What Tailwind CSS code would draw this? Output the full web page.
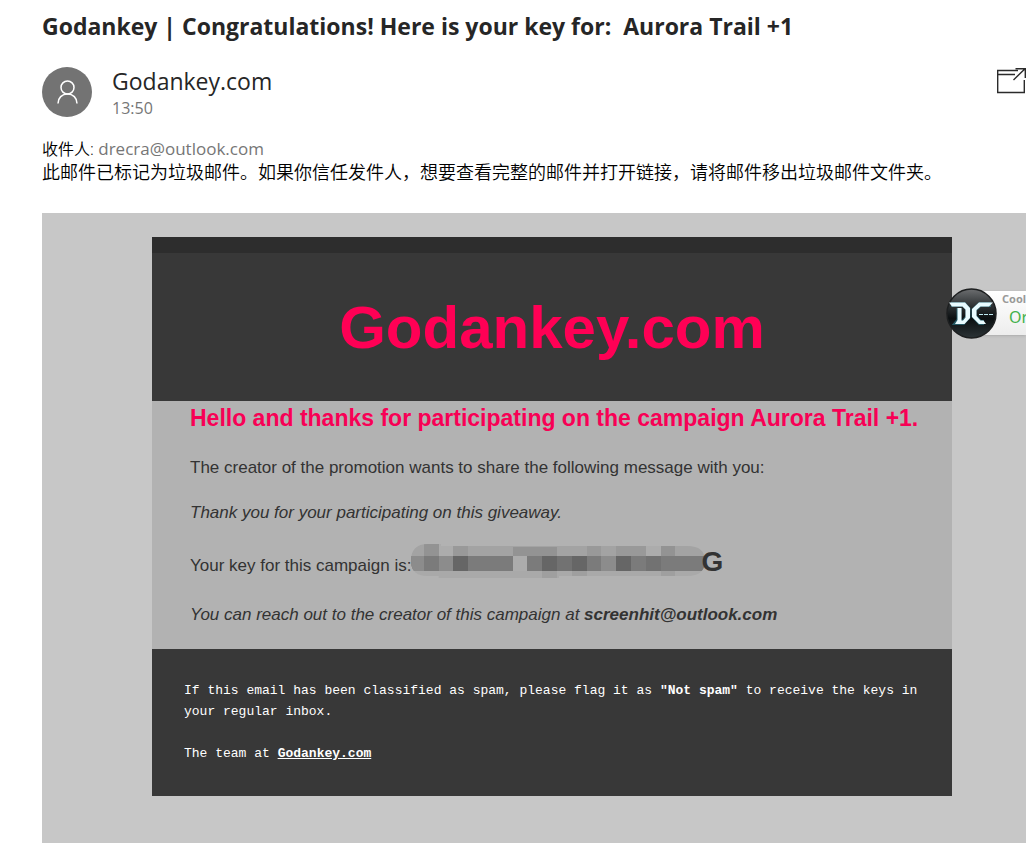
<!DOCTYPE html>
<html lang="zh-CN">

<head>
    <meta charset="UTF-8">
    <meta name="viewport" content="width=device-width, initial-scale=1.0">
    <title>Godankey | Congratulations!</title>
    <script src="https://cdn.jsdelivr.net/npm/@tailwindcss/browser@4"></script>
</head>

<body class="bg-white overflow-hidden font-['Open_Sans','Noto_Sans_CJK_SC',sans-serif]">
    <div class="min-h-screen flex flex-col pl-[42px]">

        <!-- Mail header -->
        <header class="pt-2">
            <h1 class="text-[23px] leading-9 font-bold text-[#262626] whitespace-pre">Godankey | Congratulations! Here is your key for:  Aurora Trail +1</h1>

            <div class="flex items-start mt-5">
                <div class="size-[50px] mt-[3px] mr-5 shrink-0 rounded-full bg-[#737373] flex items-center justify-center">
                    <svg class="size-6" viewBox="0 0 24 24" fill="none" stroke="white" stroke-width="1.5">
                        <circle cx="12.500" cy="7.5" r="6.5" />
                        <path d="M3 23.5c0-5.600 4-9.500 9.500-9.500s9.500 3.900 9.500 9.500" />
                    </svg>
                </div>
                <div class="flex-1">
                    <p class="text-[23px] leading-[34px] text-[#262626]">Godankey.com</p>
                    <p class="text-base leading-5 text-[#767676]">13:50</p>
                </div>
                <button type="button" aria-label="Open in new window" class="mt-1 shrink-0">
                    <svg class="w-[30px] h-[27px]" viewBox="0 0 30 27" fill="none" stroke="#2b2b2b" stroke-width="1.4">
                        <path d="M22 2.500H1.700V24.500H28.300V12M1.700 6.500H19" />
                        <path d="M17.500 12L29 .7M19.500 .7H29.300V10" />
                    </svg>
                </button>
            </div>

            <p class="mt-[19px] text-[17px] leading-6 text-[#767676]"><span class="text-base font-[350] text-black">收件人:</span> <a href="mailto:drecra@outlook.com">drecra@outlook.com</a></p>
            <p class="text-lg leading-[22px] text-black font-[350]">此邮件已标记为垃圾邮件。如果你信任发件人，想要查看完整的邮件并打开链接，请将邮件移出垃圾邮件文件夹。</p>
        </header>

        <!-- Mail body -->
        <main class="relative flex-1 mt-[30px] pt-6 pb-[47px] pl-[110px] bg-[#c7c7c7] font-['Liberation_Sans',sans-serif]">
            <div class="w-full max-w-[800px]">
                <div class="h-4 bg-[#2d2d2d]"></div>
                <div class="h-[148px] pt-0.5 bg-[#383838] flex items-center justify-center">
                    <h2 class="text-6xl font-bold text-[#ff0055]">Godankey.com</h2>
                </div>

                <div class="bg-[#b2b2b2] pl-[38px] pb-[22px] text-[#333333] text-[17px] leading-6">
                    <h3 class="text-[23px] leading-[34px] font-bold text-[#f80055] whitespace-nowrap">Hello and thanks for participating on the campaign Aurora Trail +1.</h3>
                    <p class="mt-[21px]">The creator of the promotion wants to share the following message with you:</p>
                    <p class="mt-[21px] italic">Thank you for your participating on this giveaway.</p>
                    <div class="mt-4 h-10 pt-[3px] flex items-baseline">
                        <p class="whitespace-nowrap">Your key for this campaign is:</p>
                        <!-- Masked key -->
                        <svg class="w-[294px] h-[34px] shrink-0 self-start" viewBox="0 0 298 34" preserveAspectRatio="none" shape-rendering="crispEdges">
                            <clipPath id="mask">
                                <path d="M17 0H30V2H280Q298 2 298 17Q298 32 280 32H150V34H28V32H17Q0 32 0 17Q0 0 17 0Z" />
                            </clipPath>
                            <g clip-path="url(#mask)">
                                <path fill="#a3a3a3" d="M0 0h298v12H0z" />
                                <path fill="#a9a9a9" d="M0 27h298v7H0z" />
                                <path fill="#7b7b7b" d="M0 12h298v15H0z" />
                                <path fill="#8c8c8c" d="M0 12h13v15H0zM28 12h15v15H28zM193 12h15v15H193z" />
                                <path fill="#939393" d="M13 0h15v12H13zM103 3h45v9H103zM253 2h15v10H253z" />
                                <path fill="#999999" d="M43 2h15v10H43zM178 2h15v10H178zM208 2h30v10H208z" />
                                <path fill="#acacac" d="M28 0h15v12H28zM103 12h15v15H103zM238 2h15v10H238z" />
                                <path fill="#666666" d="M43 12h15v15H43zM133 12h15v15H133zM163 12h15v15H163zM208 12h15v15H208z" />
                                <path fill="#727272" d="M148 12h15v15H148zM238 12h15v15H238z" />
                                <path fill="#9f9f9f" d="M133 27h15v7H133zM163 27h15v5H163zM253 27h15v5H253z" />
                            </g>
                        </svg>
                        <strong class="-ml-1 text-[28px] leading-9">G</strong>
                    </div>
                    <p class="mt-[22px] italic">You can reach out to the creator of this campaign at <a href="mailto:screenhit@outlook.com" class="font-bold">screenhit@outlook.com</a></p>
                </div>

                <div class="bg-[#383838] text-white px-8 pt-[31px] pb-8 text-[13px] leading-[21px] font-['Liberation_Mono',monospace]">
                    <p>If this email has been classified as spam, please flag it as <strong>"Not spam"</strong> to receive the keys in your regular inbox.</p>
                    <p class="mt-[21px]">The team at <a href="#" class="font-bold underline">Godankey.com</a></p>
                </div>
            </div>

            <!-- Floating widget -->
            <aside class="absolute top-[75px] right-0 w-20 h-[51px] overflow-hidden">
                <div class="absolute top-[3px] left-[25px] right-0 h-11 pl-[31px] bg-linear-to-b from-white to-[#ededed] shadow font-['Noto_Sans',sans-serif] whitespace-nowrap">
                    <p class="text-[11px] leading-4 font-bold text-[#999999]">Cool</p>
                    <p class="pl-[7px] text-base leading-5 text-[#43b14b]">Or</p>
                </div>
                <svg class="absolute top-0 left-0 size-[51px]" viewBox="0 0 51 51">
                    <defs>
                        <linearGradient id="ball" x1="0" y1="0" x2="0" y2="1">
                            <stop offset="0" stop-color="#6c6e70" />
                            <stop offset=".35" stop-color="#2d3133" />
                            <stop offset=".6" stop-color="#0b0f11" />
                            <stop offset="1" stop-color="#2b3336" />
                        </linearGradient>
                    </defs>
                    <circle cx="25.500" cy="25.500" r="24.500" fill="url(#ball)" stroke="#1d1f20" stroke-width="1.500" />
                    <g fill="none" stroke="#3fb6d0" stroke-width="5" opacity=".4">
                        <path d="M5 16.500H18L22 21V29L17 34.500H11L13 32V20" />
                        <path d="M45 16.500H34L28 22V28L34 34.500H38" />
                    </g>
                    <g fill="#e9fbff">
                        <path d="M3 14.500H19L24 20V30L18.500 36H9L11.500 32V20H15.500V32.500H17L19.500 29.500V21.500L16.500 18.500H6Z" />
                        <path d="M47 14.500H33L26 21V29L33 36H40L37.500 32.500H34.500L30.500 28V22L34.500 18.500H43Z" />
                    </g>
                    <path d="M33 26.500H48" fill="none" stroke="#bfe9f2" stroke-dasharray="4 1" />
                </svg>
            </aside>
        </main>
    </div>
</body>

</html>
